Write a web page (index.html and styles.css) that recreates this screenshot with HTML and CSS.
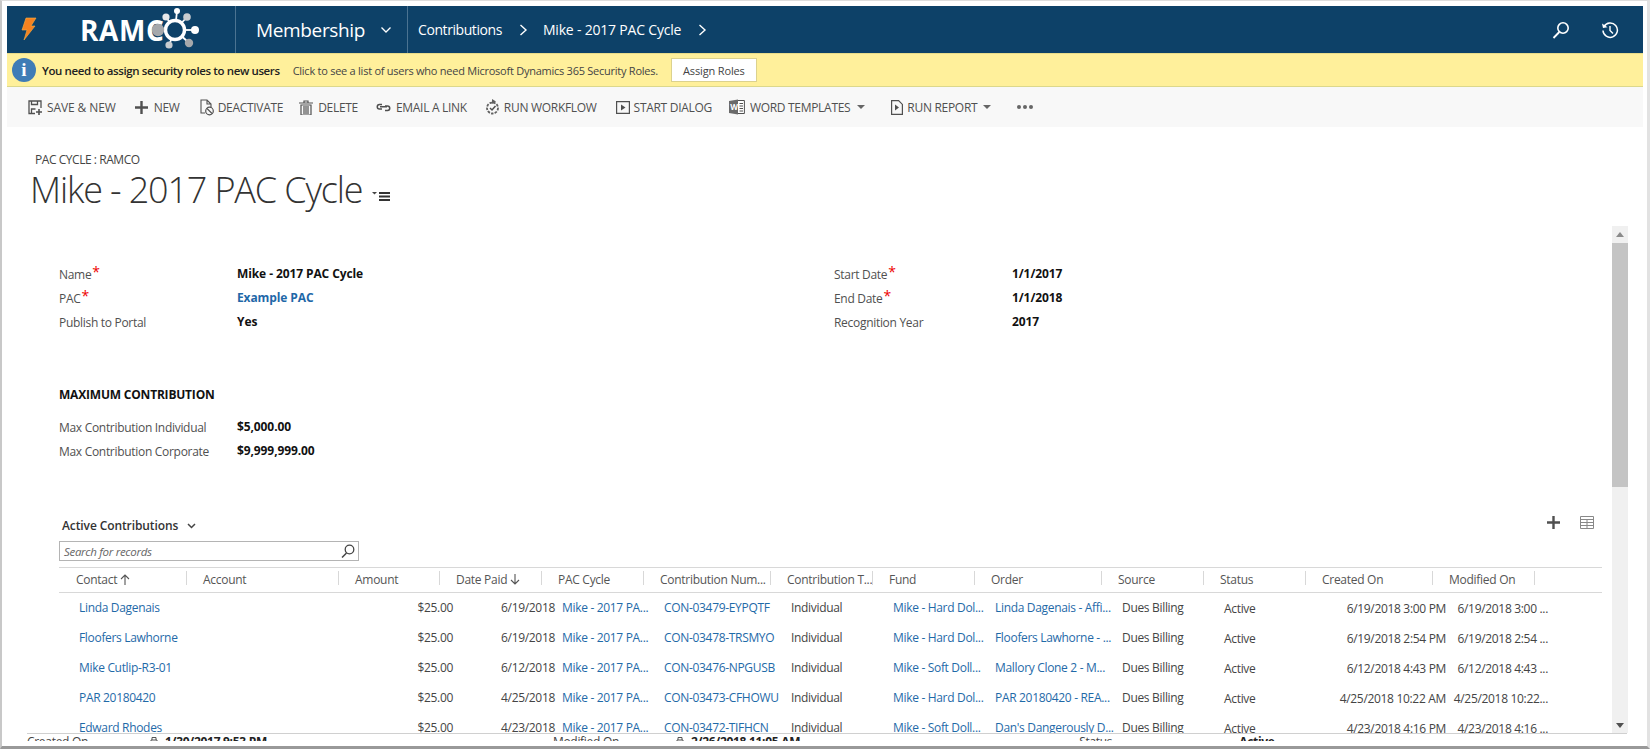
FILE: index.html
```html
<!DOCTYPE html>
<html lang="en">
<head>
<meta charset="utf-8">
<title>Mike - 2017 PAC Cycle</title>
<link rel="stylesheet" href="styles.css">
</head>
<body>
<div class="window">
  <header class="nav">
    <svg class="bolt" width="16" height="24" viewBox="0 0 16 24"><path d="M5 1h10L10 9h4L3 23l3-10H1z" fill="#f58220" stroke="#fbb040" stroke-width=".6"/></svg>
    <div class="logo">
      <span class="logo-text">RAMC</span>
      <svg class="logo-mark" width="52" height="44" viewBox="150 6 52 44"><g stroke="#fff" stroke-width="1.800"><line x1="177" y1="30" x2="179" y2="11"/><line x1="177" y1="30" x2="168" y2="17"/><line x1="177" y1="30" x2="189" y2="17"/><line x1="177" y1="30" x2="197" y2="30"/><line x1="177" y1="30" x2="171" y2="45"/><line x1="177" y1="30" x2="191" y2="43"/></g><circle cx="177" cy="30" r="9.500" fill="#0d4168" stroke="#fff" stroke-width="3.400"/><circle cx="160" cy="30" r="6.200" fill="#a6a8ab"/><circle cx="179" cy="11" r="3" fill="#fff"/><circle cx="168" cy="17" r="3.600" fill="#e6e8ea"/><circle cx="189" cy="17" r="3.800" fill="#c8ccd0"/><circle cx="197" cy="30" r="4" fill="#fff"/><circle cx="171" cy="45" r="3.600" fill="#c8ccd0"/><circle cx="191" cy="43" r="4.200" fill="#a6a8ab"/></svg>
    </div>
    <div class="app-switch">
      <span class="app-name">Membership</span>
      <svg width="12" height="8" viewBox="0 0 12 8"><path d="M1.5 1.5 6 6l4.5-4.500" fill="none" stroke="#fff" stroke-width="1.300"/></svg>
    </div>
    <nav class="crumbs">
      <span>Contributions</span>
      <svg class="crumb-sep" width="9" height="12" viewBox="0 0 9 12"><path d="M1.500 1 7 6l-5.500 5" fill="none" stroke="#fff" stroke-width="1.400"/></svg>
      <span class="crumb-current">Mike - 2017 PAC Cycle</span>
      <svg class="crumb-sep" width="9" height="12" viewBox="0 0 9 12"><path d="M1.500 1 7 6l-5.500 5" fill="none" stroke="#fff" stroke-width="1.400"/></svg>
    </nav>
    <div class="nav-tools">
      <svg width="18" height="18" viewBox="0 0 18 18"><circle cx="11" cy="7" r="5.200" fill="none" stroke="#fff" stroke-width="1.600"/><path d="M7.300 11 1.500 17" stroke="#fff" stroke-width="1.800"/></svg>
      <svg width="18" height="18" viewBox="0 0 18 18"><path d="M3 5.500A7.200 7.200 0 1 1 2 9.500" fill="none" stroke="#fff" stroke-width="1.500"/><path d="M1 2.500l1 4.500 4.500-.8z" fill="#fff"/><path d="M9 5v4.500l3 3" fill="none" stroke="#fff" stroke-width="1.400"/></svg>
    </div>
  </header>

  <div class="notice">
    <span class="info">i</span>
    <strong class="notice-title">You need to assign security roles to new users</strong>
    <span class="notice-text">Click to see a list of users who need Microsoft Dynamics 365 Security Roles.</span>
    <button class="notice-btn">Assign Roles</button>
  </div>

  <div class="commands">
    <span class="cmd cmd-save"><svg width="15" height="15" viewBox="0 0 15 15"><path d="M7 13.500H1V1h12v7M3.500 1v3.500h6V1M3.500 13.500V9h4" fill="none" stroke="#505050" stroke-width="1.300"/><path d="M11 9v6M8 12h6" stroke="#505050" stroke-width="1.600"/></svg>SAVE &amp; NEW</span>
    <span class="cmd cmd-new"><svg width="13" height="13" viewBox="0 0 13 13"><path d="M6.500 0v13M0 6.500h13" stroke="#505050" stroke-width="2.400"/></svg>NEW</span>
    <span class="cmd cmd-deact"><svg width="14" height="17" viewBox="0 0 14 17"><path d="M5 14H1V1h6l4 4v3M7 1v4h4" fill="none" stroke="#505050" stroke-width="1.100"/><circle cx="9.500" cy="12" r="3.800" fill="none" stroke="#505050" stroke-width="1.200"/><path d="M7 9.500l5 5" stroke="#505050" stroke-width="1.100"/></svg>DEACTIVATE</span>
    <span class="cmd cmd-del"><svg width="14" height="15" viewBox="0 0 14 15"><path d="M0 3h14M5 3V1h4v2M2 5h10v10H2zM5 6v8M7 6v8M9 6v8" fill="none" stroke="#505050" stroke-width="1.200"/></svg>DELETE</span>
    <span class="cmd cmd-link"><svg width="15" height="9" viewBox="0 0 15 9"><path d="M6 1.500H3.500a2 2 0 0 0 0 4.500H6M9 3h2.500a2 2 0 0 1 0 4.500H9M4 3.800h7" fill="none" stroke="#505050" stroke-width="1.500"/></svg>EMAIL A LINK</span>
    <span class="cmd cmd-flow"><svg width="15" height="16" viewBox="0 0 15 16"><circle cx="7.500" cy="9" r="5.500" fill="none" stroke="#606060" stroke-width="1.800" stroke-dasharray="2.500 1.200"/><path d="M7 0l4 2.500L7 5z" fill="#606060"/><path d="M5 9l2 2 3.500-4" fill="none" stroke="#505050" stroke-width="1.500"/></svg>RUN WORKFLOW</span>
    <span class="cmd cmd-dialog"><svg width="14" height="13" viewBox="0 0 14 13"><path d="M.6.600h12.800v11.800H.6z" fill="none" stroke="#505050" stroke-width="1.200"/><path d="M5 3.500l4.500 3L5 9.500z" fill="#505050"/></svg>START DIALOG</span>
    <span class="cmd cmd-word"><svg width="16" height="16" viewBox="0 0 16 16"><path d="M6 1.500h9.400v13H6" fill="#fff" stroke="#505050"/><path d="M0 2l9-1.500v15L0 14z" fill="#6a6a6a"/><path d="M10.500 4.500h3.500M10.500 7h3.500M10.500 9.500h3.500M10.500 12h3.500" stroke="#505050"/><text class="word-w" x="1.300" y="10.500">W</text></svg>WORD TEMPLATES<i class="caret caret-word"></i></span>
    <span class="cmd cmd-report"><svg width="12" height="15" viewBox="0 0 12 15"><path d="M.6.600h7l3.800 3.800v10H.6z" fill="none" stroke="#505050" stroke-width="1.200"/><path d="M4 4.500l4 3-4 3z" fill="#505050"/></svg>RUN REPORT<i class="caret caret-report"></i></span>
    <span class="cmd-more"><i></i><i></i><i></i></span>
  </div>

  <div class="workspace">
    <div class="scroll-area">
      <div class="entity">PAC CYCLE : RAMCO</div>
      <h1 class="title">Mike - 2017 PAC Cycle<svg class="title-menu" width="18" height="11" viewBox="0 0 18 11"><path d="M0 1h5L2.500 3.500z" fill="#444"/><path d="M7 2h11M7 5.500h11M7 9h11" stroke="#333" stroke-width="1.800"/></svg></h1>

      <section class="general">
        <dl class="fields">
          <div class="field"><dt>Name<b class="req">*</b></dt><dd>Mike - 2017 PAC Cycle</dd></div>
          <div class="field"><dt>PAC<b class="req">*</b></dt><dd class="link-val">Example PAC</dd></div>
          <div class="field"><dt>Publish to Portal</dt><dd>Yes</dd></div>
        </dl>
        <dl class="fields">
          <div class="field"><dt>Start Date<b class="req">*</b></dt><dd>1/1/2017</dd></div>
          <div class="field"><dt>End Date<b class="req">*</b></dt><dd>1/1/2018</dd></div>
          <div class="field"><dt>Recognition Year</dt><dd>2017</dd></div>
        </dl>
      </section>

      <section class="maxes">
        <h2 class="section-title">MAXIMUM CONTRIBUTION</h2>
        <dl class="fields">
          <div class="field"><dt>Max Contribution Individual</dt><dd>$5,000.00</dd></div>
          <div class="field"><dt>Max Contribution Corporate</dt><dd>$9,999,999.00</dd></div>
        </dl>
      </section>

      <section class="subgrid">
        <div class="subgrid-top">
          <span class="view-name">Active Contributions<svg width="9" height="6" viewBox="0 0 9 6"><path d="M1 1l3.500 3.500L8 1" fill="none" stroke="#444" stroke-width="1.500"/></svg></span>
          <span class="subgrid-tools">
            <svg width="13" height="13" viewBox="0 0 13 13"><path d="M6.500 0v13M0 6.500h13" stroke="#505050" stroke-width="2.400"/></svg>
            <svg width="14" height="13" viewBox="0 0 14 13"><path d="M.5.500h13v12H.5zM.5 3.500h13M.5 6.500h13M.5 9.500h13M7 3.500v9" fill="none" stroke="#888"/></svg>
          </span>
        </div>
        <div class="searchbox"><span>Search for records</span><svg width="14" height="14" viewBox="0 0 14 14"><circle cx="8.500" cy="5.500" r="4.300" fill="none" stroke="#444" stroke-width="1.300"/><path d="M5.500 9 1 13.500" stroke="#444" stroke-width="1.500"/></svg></div>
        <div class="grid-head">
          <div class="th">Contact<svg class="sort" width="10" height="11" viewBox="0 0 10 11"><path d="M5 11V1M1 5l4-4 4 4" fill="none" stroke="#555" stroke-width="1.100"/></svg></div>
          <div class="th">Account</div>
          <div class="th">Amount</div>
          <div class="th">Date Paid<svg class="sort" width="10" height="11" viewBox="0 0 10 11"><path d="M5 0v10M1 6l4 4 4-4" fill="none" stroke="#555" stroke-width="1.100"/></svg></div>
          <div class="th">PAC Cycle</div>
          <div class="th">Contribution Num...</div>
          <div class="th">Contribution T...</div>
          <div class="th">Fund</div>
          <div class="th">Order</div>
          <div class="th">Source</div>
          <div class="th">Status</div>
          <div class="th">Created On</div>
          <div class="th">Modified On</div>
        </div>
        <div class="grid-row">
          <a class="td">Linda Dagenais</a><span class="td"></span><span class="td num">$25.00</span><span class="td num">6/19/2018</span><a class="td">Mike - 2017 PA...</a><a class="td">CON-03479-EYPQTF</a><span class="td">Individual</span><a class="td">Mike - Hard Dol...</a><a class="td">Linda Dagenais - Affi...</a><span class="td">Dues Billing</span><span class="td low">Active</span><span class="td num low">6/19/2018 3:00 PM</span><span class="td num low">6/19/2018 3:00 ...</span>
        </div>
        <div class="grid-row">
          <a class="td">Floofers Lawhorne</a><span class="td"></span><span class="td num">$25.00</span><span class="td num">6/19/2018</span><a class="td">Mike - 2017 PA...</a><a class="td">CON-03478-TRSMYO</a><span class="td">Individual</span><a class="td">Mike - Hard Dol...</a><a class="td">Floofers Lawhorne - ...</a><span class="td">Dues Billing</span><span class="td low">Active</span><span class="td num low">6/19/2018 2:54 PM</span><span class="td num low">6/19/2018 2:54 ...</span>
        </div>
        <div class="grid-row">
          <a class="td">Mike Cutlip-R3-01</a><span class="td"></span><span class="td num">$25.00</span><span class="td num">6/12/2018</span><a class="td">Mike - 2017 PA...</a><a class="td">CON-03476-NPGUSB</a><span class="td">Individual</span><a class="td">Mike - Soft Doll...</a><a class="td">Mallory Clone 2 - M...</a><span class="td">Dues Billing</span><span class="td low">Active</span><span class="td num low">6/12/2018 4:43 PM</span><span class="td num low">6/12/2018 4:43 ...</span>
        </div>
        <div class="grid-row">
          <a class="td">PAR 20180420</a><span class="td"></span><span class="td num">$25.00</span><span class="td num">4/25/2018</span><a class="td">Mike - 2017 PA...</a><a class="td">CON-03473-CFHOWU</a><span class="td">Individual</span><a class="td">Mike - Hard Dol...</a><a class="td">PAR 20180420 - REA...</a><span class="td">Dues Billing</span><span class="td low">Active</span><span class="td num low">4/25/2018 10:22 AM</span><span class="td num low">4/25/2018 10:22...</span>
        </div>
        <div class="grid-row">
          <a class="td">Edward Rhodes</a><span class="td"></span><span class="td num">$25.00</span><span class="td num">4/23/2018</span><a class="td">Mike - 2017 PA...</a><a class="td">CON-03472-TIFHCN</a><span class="td">Individual</span><a class="td">Mike - Soft Doll...</a><a class="td">Dan's Dangerously D...</a><span class="td">Dues Billing</span><span class="td low">Active</span><span class="td num low">4/23/2018 4:16 PM</span><span class="td num low">4/23/2018 4:16 ...</span>
        </div>
      </section>
    </div>
    <div class="scrollbar">
      <i class="sb-arrow sb-up"></i>
      <i class="sb-thumb"></i>
      <i class="sb-arrow sb-down"></i>
    </div>
  </div>

  <footer class="footer">
    <span class="f-label">Created On</span><svg class="f-lock" width="8" height="10" viewBox="0 0 8 10"><path d="M1 4h6v5H1zM2 4V1.500h4V4" fill="none" stroke="#555"/></svg><b class="f-val">1/30/2017 9:53 PM</b>
    <span class="f-label f-mod">Modified On</span><svg class="f-lock" width="8" height="10" viewBox="0 0 8 10"><path d="M1 4h6v5H1zM2 4V1.500h4V4" fill="none" stroke="#555"/></svg><b class="f-val">2/26/2018 11:05 AM</b>
    <span class="f-label f-status">Status</span><b class="f-val f-active">Active</b>
  </footer>
</div>
</body>
</html>
```

FILE: styles.css
```css
* { box-sizing: border-box; }
html, body { margin: 0; height: 100%; overflow: hidden; background: #fff; }
body {
  padding: 5px 4px 5px 5px;
  font-family: "Open Sans", "Noto Sans", sans-serif;
  font-size: 12px;
  color: #444;
  border-top: 1px solid #ddd;
  border-left: 2px solid #c8c8c8;
  border-right: 3px solid #e2e2e2;
  border-bottom: 3px solid #999;
}
.window { height: 100%; display: flex; flex-direction: column; overflow: hidden; }

.nav { height: 47px; flex: none; background: #0d4168; color: #fff; display: flex; align-items: center; }
.bolt { margin-left: 14px; margin-top: -1px; }
.logo { width: 198px; padding-left: 43px; display: flex; align-items: center; height: 100%; }
.logo-text { font: 700 28px "Open Sans", sans-serif; letter-spacing: .6px; line-height: 1; }
.logo-mark { margin-left: -16px; margin-top: -3px; flex: none; }
.app-switch { height: 100%; width: 173px; border-left: 1px solid #4b7391; border-right: 1px solid #4b7391; display: flex; align-items: center; padding-left: 20px; gap: 15px; }
.app-name { font-size: 19px; letter-spacing: -.35px; }
.crumbs { display: flex; align-items: center; padding-left: 10px; font-size: 14px; letter-spacing: -.42px; }
.crumb-current { letter-spacing: -.2px; }
.crumb-sep { margin: 1px 15px 0 17px; }
.nav-tools { margin-left: auto; display: flex; gap: 31px; padding-right: 24px; align-items: center; }

.notice { height: 34px; flex: none; background: #fff09b; border-top: 1px solid #e8dc8a; border-bottom: 1px solid #dcd88c; display: flex; align-items: center; color: #444; }
.info { width: 24px; height: 24px; border-radius: 50%; background: #3f7cb6; color: #fff; margin-left: 5px; display: flex; align-items: center; justify-content: center; font: 700 19px "Liberation Serif", serif; }
.notice-title { margin-left: 6px; color: #222; font-size: 11.5px; font-weight: 600; letter-spacing: -.39px; white-space: nowrap; }
.notice-text { margin-left: 13px; font-size: 11px; letter-spacing: -.25px; white-space: nowrap; }
.notice-btn { margin-left: 13px; width: 86px; height: 24px; background: #fff; border: 1px solid #dcd28e; font: 11px "Open Sans", sans-serif; letter-spacing: -.15px; color: #444; padding: 0; }

.commands { height: 40px; flex: none; background: #f8f8f8; display: flex; align-items: center; font-size: 12px; letter-spacing: -.3px; color: #505050; white-space: nowrap; }
.cmd { display: inline-flex; align-items: center; gap: 4px; }
.cmd-save { margin-left: 21px; letter-spacing: -.1px; }
.cmd-new { margin-left: 19px; gap: 6px; }
.cmd-deact { margin-left: 20px; }
.cmd-del { margin-left: 16px; gap: 5px; }
.cmd-link { margin-left: 18px; gap: 5px; }
.cmd-flow { margin-left: 18px; }
.cmd-dialog { margin-left: 19px; }
.cmd-word { margin-left: 17px; gap: 5px; }
.cmd-report { margin-left: 26px; }
.caret { width: 0; height: 0; border: 4px solid transparent; border-top-color: #666; border-bottom: 0; }
.caret-word { margin-left: 2px; }
.caret-report { margin-left: 2px; }
.word-w { font: 700 8px "Open Sans", sans-serif; fill: #fff; }
.cmd-more { margin-left: 26px; display: inline-flex; gap: 2px; }
.cmd-more i { width: 4px; height: 4px; border-radius: 50%; background: #666; }

.workspace { flex: 1; min-height: 0; display: flex; overflow: hidden; }
.scroll-area { flex: 1; min-width: 0; overflow: hidden; }
.entity { margin: 25px 0 0 28px; font-size: 12px; line-height: 16px; letter-spacing: -.45px; color: #444; }
.title { margin: -2px 0 0 23px; font: 300 36px/47px "Open Sans", "Noto Sans", sans-serif; letter-spacing: -1.15px; color: #333; white-space: nowrap; display: flex; align-items: flex-end; }
.title-menu { margin-left: 10px; margin-bottom: 11px; }

.general { margin: 49px 0 0 52px; display: grid; grid-template-columns: 775px 1fr; }
.fields { margin: 0; }
.field { display: flex; height: 24px; align-items: center; }
.field dt { width: 178px; color: #505050; letter-spacing: -.3px; flex: none; }
.field dd { margin: 0; font-weight: 700; color: #111; letter-spacing: -.1px; position: relative; top: -1px; }
.link-val { color: #1f68a8 !important; }
.req { color: #e00; font-weight: 400; font-size: 14px; line-height: 10px; margin-left: 1px; vertical-align: 2px; }

.maxes { margin: 53px 0 0 52px; }
.section-title { margin: 0 0 12px; font-size: 12px; line-height: 16px; font-weight: 700; color: #111; letter-spacing: -.2px; }

.subgrid { margin: 46px 0 0 52px; }
.subgrid-top { width: 1543px; display: flex; justify-content: space-between; align-items: flex-start; height: 32px; }
.view-name { margin: 8px 0 0 3px; font-weight: 600; color: #333; letter-spacing: -.1px; display: inline-flex; align-items: center; gap: 9px; }
.subgrid-tools { display: inline-flex; align-items: center; gap: 20px; margin: 7px 8px 0 0; }
.searchbox { width: 300px; height: 20px; border: 1px solid #b4b4b4; display: flex; align-items: center; justify-content: space-between; padding: 0 3px 0 4px; font-style: italic; color: #666; letter-spacing: -.3px; font-size: 11.5px; }
.grid-head, .grid-row { width: 1543px; display: grid; grid-template-columns: 128px 152px 101px 102px 102px 127px 102px 102px 127px 102px 102px 127px 102px 1fr; }
.grid-head { margin-top: 6px; height: 26px; border-top: 1px solid #d8d8d8; border-bottom: 1px solid #d8d8d8; }
.th { padding-left: 16px; color: #555; line-height: 24px; letter-spacing: -.28px; white-space: nowrap; overflow: hidden; position: relative; }
.th::after { content: ""; position: absolute; right: 0; top: 3px; height: 14px; width: 1px; background: #d8d8d8; }
.th:first-child { padding-left: 17px; }
.sort { margin-left: 3px; vertical-align: -1px; }
.grid-row { height: 30px; align-items: center; padding-bottom: 2px; }
.td { padding-left: 20px; letter-spacing: -.32px; white-space: nowrap; color: #444; }
a.td { color: #1f6aa8; }
.num { text-align: right; padding-left: 0; margin-right: -13px; }
.low { position: relative; top: 1px; }

.scrollbar { width: 16px; flex: none; margin: 99px 15px 0 0; background: #f0f0f0; display: flex; flex-direction: column; align-items: center; position: relative; }
.sb-thumb { width: 16px; height: 244px; background: #c4c4c4; margin-top: 17px; }
.sb-arrow { position: absolute; width: 0; height: 0; border-left: 4px solid transparent; border-right: 4px solid transparent; }
.sb-up { top: 6px; border-bottom: 5px solid #8a8a8a; }
.sb-down { bottom: 5px; border-top: 5px solid #505050; }

.footer { flex: none; height: 8px; margin-left: 20px; margin-right: 16px; border-top: 1px solid #d0d0d0; background: #fff; display: flex; align-items: flex-start; overflow: hidden; line-height: 16px; white-space: nowrap; font-size: 12px; }
.f-label { width: 123px; letter-spacing: -.3px; }
.f-mod { margin-left: 286px; }
.f-status { margin-left: 279px; }
.f-lock { margin: 2px 7px 0 0; }
.f-val { color: #222; letter-spacing: -.3px; }
.f-active { margin-left: 37px; }
```
